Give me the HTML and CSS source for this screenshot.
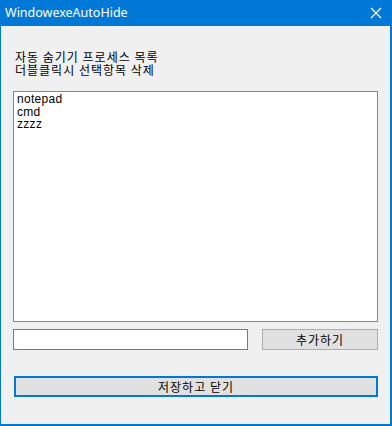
FILE: index.html
```html
<!DOCTYPE html>
<html>
<head>
<meta charset="utf-8">
<link rel="stylesheet" href="styles.css">
</head>
<body>
<div class="window">
  <div class="titlebar">
    <span class="title">WindowexeAutoHide</span>
    <svg class="close" width="12" height="12" viewBox="0 0 12 12"><path d="M1 1 L11 11 M11 1 L1 11" stroke="#fff" stroke-width="1.3" fill="none"/></svg>
  </div>
  <div class="client">
    <div class="labels">
      <div>자동 숨기기 프로세스 목록</div>
      <div>더블클릭시 선택항목 삭제</div>
    </div>
    <div class="listbox">
      <div class="item">notepad</div>
      <div class="item">cmd</div>
      <div class="item">zzzz</div>
    </div>
    <div class="row">
      <div class="textbox"></div>
      <div class="btn add">추가하기</div>
    </div>
    <div class="btn save">저장하고 닫기</div>
  </div>
</div>
</body>
</html>
```
FILE: styles.css
```css
html, body {
  margin: 0;
  padding: 0;
  background: #f0f0f0;
}
.window {
  width: 392px;
  height: 426px;
  display: flex;
  flex-direction: column;
  box-sizing: border-box;
}
.titlebar {
  height: 26px;
  flex: none;
  background: #0078d7;
  display: flex;
  align-items: center;
  justify-content: space-between;
  padding: 0 10px 1px 5px;
  box-sizing: border-box;
}
.title {
  color: #fff;
  font-family: "Noto Sans", "Open Sans", sans-serif;
  font-size: 12.5px;
  line-height: 16px;
}
.close {
  display: block;
  margin-top: 1px;
}
.client {
  flex: 1;
  border: 1px solid #0078d7;
  border-top: none;
  border-right-width: 2px;
  border-bottom-width: 2px;
  background: #f0f0f0;
  padding: 24px 12px 0 12px;
  display: flex;
  flex-direction: column;
  font-family: "Noto Sans CJK KR", "Liberation Sans", sans-serif;
  font-size: 12px;
  color: #000;
}
.labels {
  padding-left: 2px;
  line-height: 13px;
  font-size: 12px;
  letter-spacing: 1px;
}
.listbox {
  margin-top: 15px;
  width: 365px;
  height: 231px;
  box-sizing: border-box;
  border: 1px solid #828790;
  background: #fff;
  padding: 1px 3px;
}
.item {
  font-family: "Liberation Sans", sans-serif;
  font-size: 12px;
  letter-spacing: 0.3px;
  line-height: 12.5px;
}
.row {
  margin-top: 7px;
  display: flex;
  justify-content: space-between;
  width: 365px;
}
.textbox {
  width: 235px;
  height: 21px;
  box-sizing: border-box;
  border: 1px solid #7a7a7a;
  background: #fff;
}
.btn {
  box-sizing: border-box;
  background: #e1e1e1;
  display: flex;
  align-items: center;
  justify-content: center;
  font-family: "Noto Sans CJK KR", sans-serif;
  font-size: 12px;
  letter-spacing: 1px;
  line-height: 14px;
}
.add {
  width: 116px;
  height: 21px;
  border: 1px solid #adadad;
}
.save {
  margin-top: 26px;
  margin-left: 1px;
  width: 364px;
  height: 21px;
  border: 2px solid #0078d7;
}
```
